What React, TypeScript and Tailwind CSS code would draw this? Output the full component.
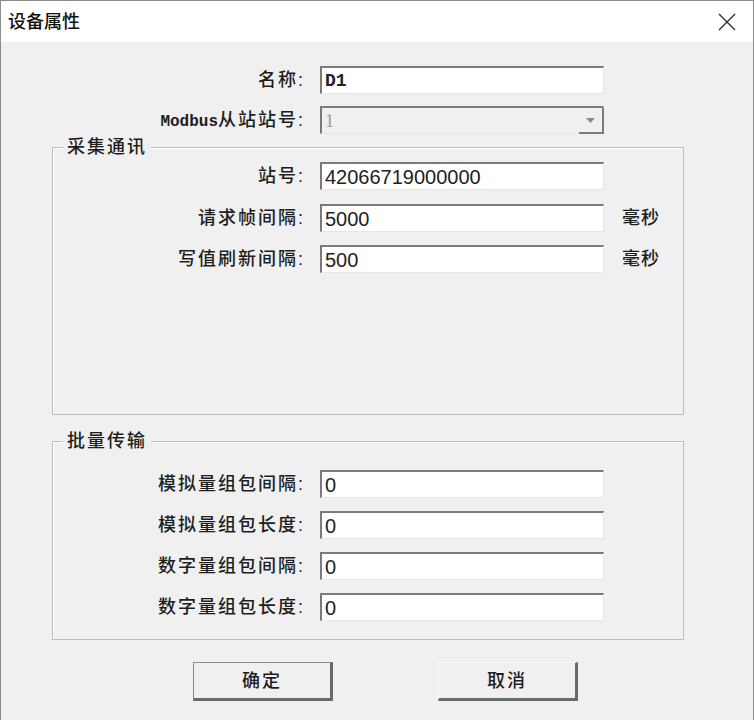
import React from 'react'

const sunken =
    'h-[28px] w-[284px] border-t-2 border-l-2 border-b border-r border-t-[#7a7a7a] border-l-[#7a7a7a] border-b-[#e6e6e6] border-r-[#e6e6e6] flex items-center'

interface RowProps {
    label: React.ReactNode
    lw: string
    value?: string
    unit?: string
    mono?: boolean
}

function Row({ label, lw, value, unit, mono }: RowProps) {
    return (
        <div className="flex items-center h-[28px]">
            <div className={`${lw} pr-[15px] text-right text-[18px] leading-none tracking-[2px] text-[#1e1e1e] font-medium whitespace-nowrap`}>
                {label}
            </div>
            <div className={`${sunken} bg-white pl-[3px]`}>
                {mono ? (
                    <span className="font-['Liberation_Mono',monospace] font-bold text-[18px] leading-none text-[#222]">{value}</span>
                ) : (
                    <span className="text-[20px] leading-none text-[#222]">{value}</span>
                )}
            </div>
            {unit && (
                <span className="ml-[18px] text-[18px] leading-none tracking-[1px] font-medium text-[#1e1e1e]">{unit}</span>
            )}
        </div>
    )
}

function GroupBox({ title, className, children }: { title: string; className: string; children: React.ReactNode }) {
    return (
        <div className={`relative ml-[51px] w-[632px] border border-[#bdbdbd] shadow-[inset_1px_1px_0_#ffffff] ${className}`}>
            <span className="absolute -top-[12px] left-[10px] px-[4px] bg-[#f0f0f0] text-[18px] leading-[22px] tracking-[2px] font-medium text-[#1e1e1e]">
                {title}
            </span>
            {children}
        </div>
    )
}

export default function App() {
    return (
        <div className="w-[754px] h-[720px] bg-[#f0f0f0] border-t border-x border-[#8c8c8c] font-['Liberation_Sans','Noto_Sans_CJK_SC',sans-serif] overflow-hidden">
            {/* 标题栏 */}
            <div className="h-[41px] bg-white flex items-center justify-between pl-[7px] pr-[17px]">
                <span className="text-[18px] leading-none font-medium text-[#111]">设备属性</span>
                <svg width="18" height="18" viewBox="0 0 18 18">
                    <path d="M1 1L17 17M17 1L1 17" stroke="#333" strokeWidth="1.4" fill="none" />
                </svg>
            </div>

            <div className="pt-[24px] flex flex-col">
                <Row label="名称:" lw="w-[319px]" value="D1" mono />

                {/* Modbus从站站号 */}
                <div className="flex items-center h-[28px] mt-[12px]">
                    <div className="w-[319px] pr-[15px] text-right text-[18px] leading-none tracking-[2px] text-[#1e1e1e] font-medium whitespace-nowrap">
                        <span className="font-['Liberation_Mono',monospace] font-bold text-[16px] tracking-normal">Modbus</span>从站站号:
                    </div>
                    <div className={`${sunken} bg-[#f0f0f0] pl-[3px] justify-between`}>
                        <span className="font-['Liberation_Serif',serif] text-[18px] leading-none text-[#9a9a9a]">1</span>
                        <div className="w-[25px] h-[26px] -mb-px -mr-px border-b-2 border-r-2 border-[#7a7a7a] flex items-center justify-center">
                            <svg width="9" height="5" viewBox="0 0 9 5">
                                <path d="M0 0H9L4.5 5Z" fill="#8a8a8a" />
                            </svg>
                        </div>
                    </div>
                </div>

                {/* 采集通讯 */}
                <GroupBox title="采集通讯" className="mt-[13px] h-[268px] pt-[14px]">
                    <div className="flex flex-col">
                        <Row label="站号:" lw="w-[267px]" value="42066719000000" />
                        <div className="mt-[14px]">
                            <Row label="请求帧间隔:" lw="w-[267px]" value="5000" unit="毫秒" />
                        </div>
                        <div className="mt-[13px]">
                            <Row label="写值刷新间隔:" lw="w-[267px]" value="500" unit="毫秒" />
                        </div>
                    </div>
                </GroupBox>

                {/* 批量传输 */}
                <GroupBox title="批量传输" className="mt-[26px] h-[199px] pt-[28px]">
                    <div className="flex flex-col gap-[13px]">
                        <Row label="模拟量组包间隔:" lw="w-[267px]" value="0" />
                        <Row label="模拟量组包长度:" lw="w-[267px]" value="0" />
                        <Row label="数字量组包间隔:" lw="w-[267px]" value="0" />
                        <Row label="数字量组包长度:" lw="w-[267px]" value="0" />
                    </div>
                </GroupBox>

                {/* 按钮 */}
                <div className="mt-[22px] ml-[192px] flex gap-[105px]">
                    <button className="w-[140px] h-[39px] bg-[#f0f0f0] border-t border-l border-b-[3px] border-r-[3px] border-t-[#8a8a8a] border-l-[#8a8a8a] border-b-[#6a6a6a] border-r-[#6a6a6a] text-[18px] leading-none tracking-[2px] font-medium text-[#1e1e1e]">
                        确定
                    </button>
                    <button className="w-[140px] h-[39px] bg-[#f0f0f0] border-t border-l border-b-[3px] border-r-[3px] border-t-[#fafafa] border-l-[#fafafa] border-b-[#6a6a6a] border-r-[#6a6a6a] text-[18px] leading-none tracking-[2px] font-medium text-[#1e1e1e]">
                        取消
                    </button>
                </div>
            </div>
        </div>
    )
}
